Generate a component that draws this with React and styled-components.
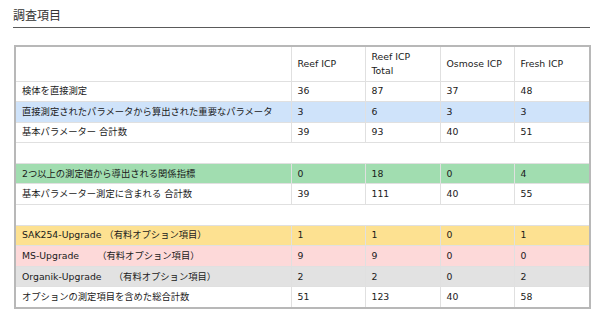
import React from "react";
import styled, { createGlobalStyle } from "styled-components";

const Global = createGlobalStyle`
  html, body { margin: 0; padding: 0; background: #fff; }
  body { font-family: "DejaVu Sans", "Noto Sans CJK JP", sans-serif; color: #1a1a1a; }
`;

const Page = styled.div`
  width: 600px;
  height: 328px;
  padding: 7px 10px 0 14px;
  box-sizing: border-box;
`;

const Title = styled.h2`
  margin: 0;
  padding: 0 0 4px 0;
  font-family: "Noto Sans CJK JP", sans-serif;
  font-weight: 400;
  font-size: 12px;
  line-height: 16px;
  color: #333;
  border-bottom: 1px solid #5a5a5a;
  width: 577px;
  margin-left: -1px;
`;

const Table = styled.table`
  margin-top: 17px;
  border-collapse: collapse;
  border: 2px solid #b8b8b8;
  table-layout: fixed;
  width: 575px;
  font-size: 9.3px;
`;

const Col = styled.col`
  width: ${(p) => p.$w}px;
`;

const bgs = {
  white: "#ffffff",
  blue: "#cfe3fa",
  green: "#a1ddb0",
  yellow: "#fde191",
  pink: "#fdd9d9",
  gray: "#e2e2e2",
};

const Row = styled.tr`
  background: ${(p) => bgs[p.$tone || "white"]};
  height: ${(p) => (p.$head ? 35 : 20.6)}px;
`;

const Cell = styled.td`
  border: 1px solid #e0e0e0;
  padding: 0 6px;
  vertical-align: middle;
  line-height: 14px;
  white-space: nowrap;
  font-family: "DejaVu Sans", "Noto Sans CJK JP", sans-serif;
`;

const Gap = styled.span`
  white-space: pre;
`;

const rows = [
  { label: "検体を直接測定", v: [36, 87, 37, 48] },
  { label: "直接測定されたパラメータから算出された重要なパラメータ", v: [3, 6, 3, 3], tone: "blue" },
  { label: "基本パラメーター 合計数", v: [39, 93, 40, 51] },
  { empty: true },
  { label: "2つ以上の測定値から導出される関係指標", v: [0, 18, 0, 4], tone: "green" },
  { label: "基本パラメーター測定に含まれる 合計数", v: [39, 111, 40, 55] },
  { empty: true },
  { label: "SAK254-Upgrade", gap: " ", opt: true, v: [1, 1, 0, 1], tone: "yellow" },
  { label: "MS-Upgrade", gap: "　   ", opt: true, v: [9, 9, 0, 0], tone: "pink" },
  { label: "Organik-Upgrade", gap: "　 ", opt: true, v: [2, 2, 0, 2], tone: "gray" },
  { label: "オプションの測定項目を含めた総合計数", v: [51, 123, 40, 58] },
];

export default function App() {
  return (
    <Page>
      <Global />
      <Title>調査項目</Title>
      <Table>
        <colgroup>
          <Col $w={276} />
          <Col $w={74} />
          <Col $w={75} />
          <Col $w={74} />
          <Col $w={76} />
        </colgroup>
        <tbody>
          <Row $head>
            <Cell />
            <Cell>Reef ICP</Cell>
            <Cell>
              Reef ICP
              <br />
              Total
            </Cell>
            <Cell>Osmose ICP</Cell>
            <Cell>Fresh ICP</Cell>
          </Row>
          {rows.map((r, i) =>
            r.empty ? (
              <Row key={i}>
                <Cell colSpan={5} />
              </Row>
            ) : (
              <Row key={i} $tone={r.tone}>
                <Cell>
                  {r.label}
                  {r.opt && (
                    <>
                      <Gap>{r.gap}</Gap>（有料オプション項目）
                    </>
                  )}
                </Cell>
                {r.v.map((n, j) => (
                  <Cell key={j}>{n}</Cell>
                ))}
              </Row>
            )
          )}
        </tbody>
      </Table>
    </Page>
  );
}
